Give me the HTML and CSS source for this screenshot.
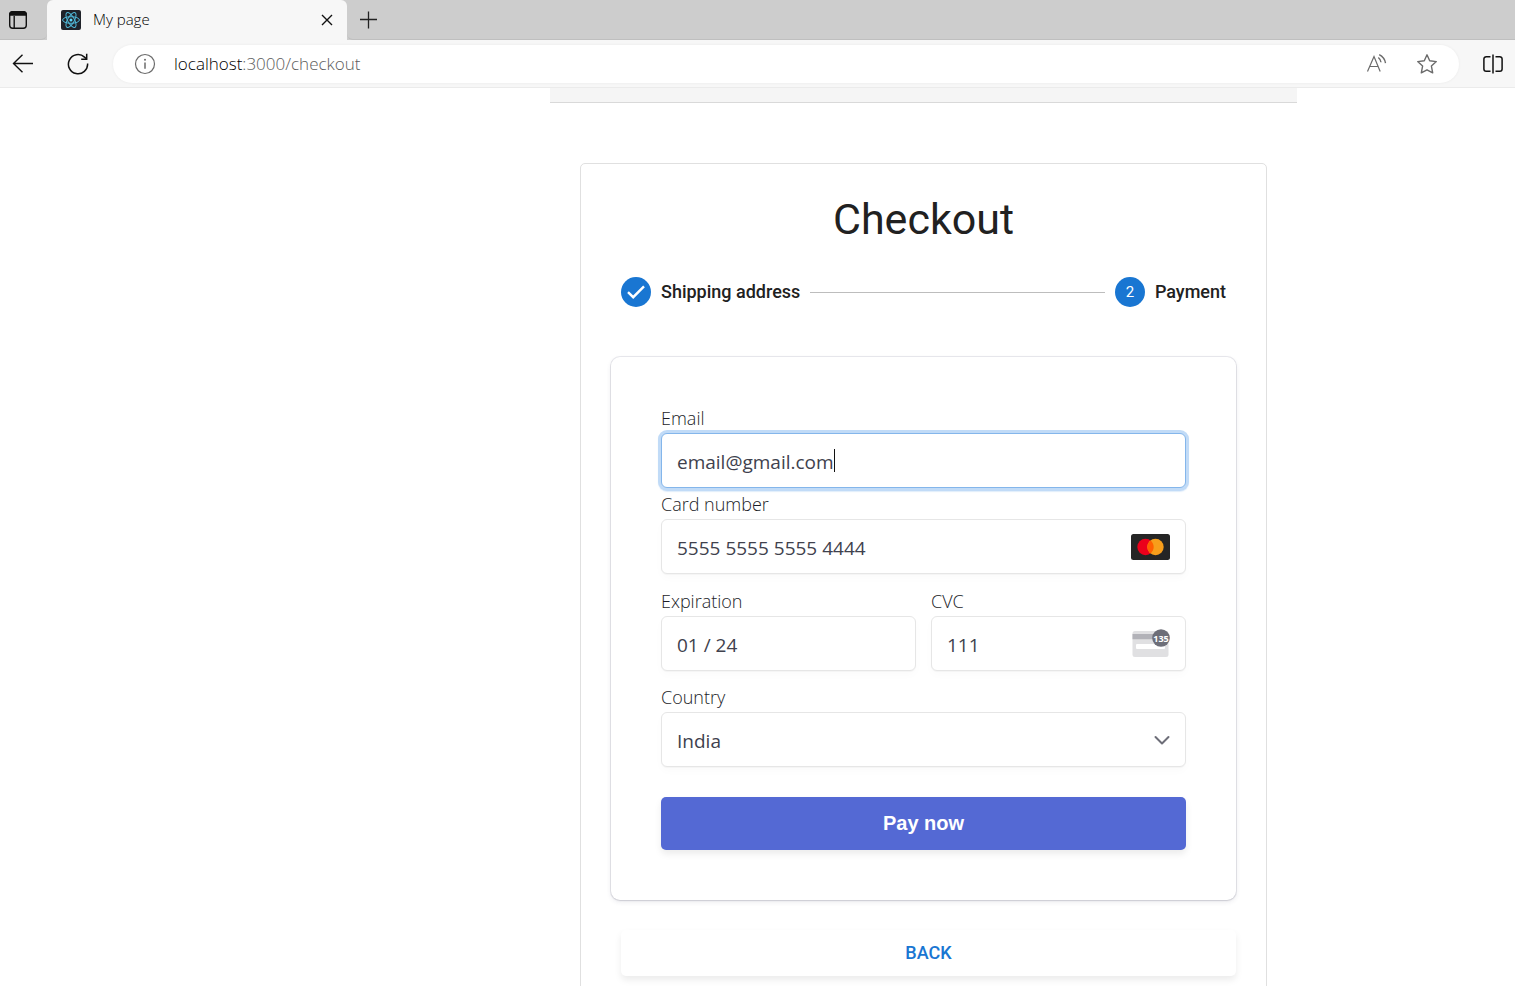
FILE: index.html
```html
<!DOCTYPE html>
<html lang="en">
<head>
<meta charset="utf-8">
<meta name="viewport" content="width=device-width, initial-scale=1">
<title>My page</title>
<link rel="stylesheet" href="styles.css">
</head>
<body class="window">
<header class="browser">
  <div class="tabs">
    <button class="icon-btn tab-actions" aria-label="Tab actions">
      <svg width="20" height="20" viewBox="0 0 20 20" fill="none" stroke="#111" stroke-width="1.4"><rect x="1.7" y="1.7" width="16.6" height="16.6" rx="3"/><path d="M6.2 6v12"/><path d="M1.7 5V4.7a3 3 0 0 1 3-3h10.6a3 3 0 0 1 3 3V5z" fill="#111"/></svg>
    </button>
    <div class="tab">
      <svg class="favicon" width="20" height="20" viewBox="0 0 20 20" fill="none" stroke="#4fb8d8" stroke-width="1"><rect width="20" height="20" rx="2" fill="#20232a" stroke="none"/><ellipse cx="10" cy="10" rx="8.4" ry="3.3"/><ellipse cx="10" cy="10" rx="8.4" ry="3.3" transform="rotate(60 10 10)"/><ellipse cx="10" cy="10" rx="8.4" ry="3.3" transform="rotate(120 10 10)"/><circle cx="10" cy="10" r="1.5" fill="#61dafb" stroke="none"/></svg>
      <span class="tab-title">My page</span>
      <button class="icon-btn" aria-label="Close tab">
        <svg width="12" height="12" viewBox="0 0 12 12" stroke="#111" stroke-width="1.4"><path d="M1 1l10 10M11 1L1 11"/></svg>
      </button>
    </div>
    <button class="icon-btn new-tab" aria-label="New tab">
      <svg width="18" height="18" viewBox="0 0 18 18" stroke="#222" stroke-width="1.3"><path d="M8.5 0.5v17M0 8.5h17"/></svg>
    </button>
  </div>
  <div class="toolbar">
    <button class="icon-btn back" aria-label="Back">
      <svg width="22" height="20" viewBox="0 0 22 20" fill="none" stroke="#111" stroke-width="1.4"><path d="M21 9.5H1.5M10.5 0.7L1.5 9.5l9 8.8"/></svg>
    </button>
    <button class="icon-btn reload" aria-label="Refresh">
      <svg width="22" height="22" viewBox="0 0 22 22" fill="none" stroke="#111" stroke-width="1.5"><path d="M20.6 10.5A9.6 9.6 0 1 1 17.5 4.1L19.6 6"/><path d="M19.7 0.8v5.4h-5.5"/></svg>
    </button>
    <div class="address">
      <svg width="22" height="22" viewBox="0 0 22 22" fill="none" stroke="#6b6b6b" stroke-width="1.2"><circle cx="11" cy="11" r="9.5"/><path d="M11 9.5v6.2" stroke-width="1.5"/><circle cx="11" cy="6.8" r="1" fill="#6b6b6b" stroke="none"/></svg>
      <a class="url" href="#checkout"><span class="host">localhost</span>:3000/checkout</a>
      <button class="icon-btn" aria-label="Read aloud">
        <svg width="22" height="22" viewBox="0 0 22 22" fill="none" stroke="#6b6b6b" stroke-width="1.2"><path d="M1.5 18.5L8 3.5l6.2 15M3.8 13.5h8.4"/><path d="M12.3 4.5q2.4 1.8 2.7 4.8M13.2 1.7q5.3 2.6 6.3 8.4" stroke-width="1.4"/></svg>
      </button>
      <button class="icon-btn" aria-label="Add to favorites">
        <svg width="22" height="22" viewBox="0 0 22 22" fill="none" stroke="#6b6b6b" stroke-width="1.4" stroke-linejoin="round"><path d="M11 1.8l2.7 6 6.6.8-4.9 4.5 1.3 6.7L11 16.8l-5.7 3 1.3-6.7L1.7 8.6l6.6-.8z"/></svg>
      </button>
    </div>
    <button class="icon-btn split" aria-label="Split screen">
      <svg width="20" height="20" viewBox="0 0 20 20" fill="none" stroke="#111" stroke-width="1.5"><path d="M10 0.5v19"/><path d="M7.5 2.7H3.2A2.3 2.3 0 0 0 .9 5v10a2.3 2.3 0 0 0 2.3 2.3h4.3M12.5 2.7h4.3A2.3 2.3 0 0 1 19.1 5v10a2.3 2.3 0 0 1-2.3 2.3h-4.3"/></svg>
    </button>
  </div>
</header>

<main class="page">
  <div class="column">
    <div class="appbar"></div>
    <section class="paper" id="checkout">
      <h1 class="title">Checkout</h1>
      <ol class="stepper">
        <li class="step">
          <span class="dot"><svg width="30" height="30" viewBox="0 0 30 30" fill="none" stroke="#fff" stroke-width="2.4"><path d="M7 15.2l5.2 5L23 9.4"/></svg></span>
          Shipping address
        </li>
        <li class="connector" aria-hidden="true"></li>
        <li class="step"><span class="dot">2</span>Payment</li>
      </ol>

      <form class="card">
        <div class="group">
          <label class="label" for="email">Email</label>
          <div class="field focused">
            <input class="input fit" id="email" type="text" size="15" value="email@gmail.com"><span class="caret"></span>
          </div>
        </div>
        <div class="group tight">
          <label class="label" for="number">Card number</label>
          <div class="field">
            <input class="input" id="number" type="text" value="5555 5555 5555 4444">
            <svg class="brand" width="39" height="26" viewBox="0 0 39 26"><rect width="39" height="26" rx="2.5" fill="#252525"/><circle cx="14.5" cy="13" r="8.2" fill="#eb001b"/><circle cx="24.5" cy="13" r="8.2" fill="#f79e1b"/><path d="M19.5 6.5a8.2 8.2 0 0 1 0 13 8.2 8.2 0 0 1 0-13z" fill="#ff5f00"/></svg>
          </div>
        </div>
        <div class="row">
          <div class="group">
            <label class="label" for="expiry">Expiration</label>
            <div class="field"><input class="input" id="expiry" type="text" value="01 / 24"></div>
          </div>
          <div class="group">
            <label class="label" for="cvc">CVC</label>
            <div class="field">
              <input class="input" id="cvc" type="text" value="111">
              <svg class="brand" width="39" height="30" viewBox="0 1 39 30"><rect x="1.5" y="3" width="36" height="26" rx="2.5" fill="#e0e0e2"/><path d="M1.5 6h36v5.3h-36z" fill="#b2b2b8"/><rect x="5" y="16" width="29" height="5" rx="1" fill="#fff"/><circle cx="30" cy="10" r="8.8" fill="#6d6e78"/><text class="cvc-digits" x="30" y="13.5" text-anchor="middle">135</text></svg>
            </div>
          </div>
        </div>
        <div class="group spaced">
          <label class="label" for="country">Country</label>
          <div class="field">
            <select class="input" id="country"><option>India</option></select>
            <svg width="16" height="10" viewBox="0 0 16 10" fill="none" stroke="#6d6e78" stroke-width="2" stroke-linecap="round" stroke-linejoin="round"><path d="M1.5 2L8 8.5 14.5 2"/></svg>
          </div>
        </div>
        <button class="pay" type="button">Pay now</button>
      </form>

      <button class="back-btn" type="button">BACK</button>
    </section>
  </div>
</main>
</body>
</html>
```
FILE: styles.css
```css
* { box-sizing: border-box; }

.window {
  margin: 0;
  height: 100vh;
  display: flex;
  flex-direction: column;
  background: #fff;
  color: #212121;
  font-family: "Open Sans", "Noto Sans", sans-serif;
}

.icon-btn {
  display: flex;
  padding: 0;
  border: 0;
  background: none;
}

/* Browser chrome */
.browser { flex: none; background: #f7f7f7; border-bottom: 1px solid #ebebeb; }

.tabs { display: flex; height: 40px; background: #cdcdcd; }

.tab-actions {
  width: 47px;
  padding-left: 8px;
  align-items: center;
  border-bottom: 1px solid #bfbfbf;
  border-bottom-right-radius: 6px;
}

.tab {
  display: flex;
  align-items: center;
  gap: 12px;
  width: 300px;
  padding: 0 14px;
  background: #f7f7f7;
  border-radius: 6px 6px 0 0;
}

.tab-title { flex: 1; padding-bottom: 2px; font-size: 15px; font-weight: 300; color: #000; }

.new-tab {
  flex: 1;
  align-items: center;
  padding-left: 13px;
  border-bottom: 1px solid #bfbfbf;
  border-bottom-left-radius: 6px;
}

.toolbar { display: flex; align-items: center; height: 47px; padding: 0 12px; }
.reload { margin-left: 33px; }
.split { margin-left: 24px; }

.address {
  flex: 1;
  display: flex;
  align-items: center;
  gap: 28px;
  height: 38px;
  margin-left: 24px;
  padding: 0 21px;
  background: #fff;
  border-radius: 19px;
  box-shadow: 0 0 3px rgba(0, 0, 0, 0.06);
}

.url {
  flex: 1;
  margin-left: -10px;
  font-size: 17px;
  font-weight: 300;
  color: #5c5c5c;
  text-decoration: none;
}

.host { color: #000; }

/* Page */
.page {
  flex: 1;
  min-height: 0;
  overflow: auto;
  scrollbar-width: none;
  display: grid;
  grid-template-columns: minmax(0, 550fr) minmax(0, 747fr) minmax(0, 218fr);
}

.column { grid-column: 2; }

.appbar { height: 15px; background: #f5f5f5; border-bottom: 1px solid #d9d9d9; }

.paper {
  margin: 60px 30px;
  padding: 30px;
  border: 1px solid #e0e0e0;
  border-radius: 5px;
}

.title {
  margin: 0 0 3px;
  font: 400 43px/50px Roboto, sans-serif;
  text-align: center;
}

.stepper {
  display: flex;
  align-items: center;
  gap: 10px;
  margin: 0;
  padding: 30px 10px 50px;
  list-style: none;
}

.step {
  display: flex;
  align-items: center;
  gap: 10px;
  font: 500 18px/26px Roboto, sans-serif;
}

.dot {
  display: flex;
  align-items: center;
  justify-content: center;
  width: 30px;
  height: 30px;
  border-radius: 50%;
  background: #1976d2;
  color: #fff;
  font-size: 15px;
  font-weight: 400;
}

.connector { flex: 1; height: 1px; background: #bdbdbd; }

.card {
  display: flex;
  flex-direction: column;
  padding: 50px;
  border-radius: 9px;
  box-shadow: 0 0 0 1px rgba(50, 50, 93, 0.1), 0 2px 5px rgba(50, 50, 93, 0.1), 0 1px 2px rgba(0, 0, 0, 0.07);
}

.group { flex: 1; min-width: 0; }
.tight { margin-top: 5px; }
.spaced { margin-top: 15px; }
.row { display: flex; gap: 15px; margin-top: 16px; }

.label {
  display: block;
  height: 26px;
  font-size: 18px;
  line-height: 22px;
  font-weight: 300;
  color: #1c1d28;
}

.field {
  display: flex;
  align-items: center;
  height: 55px;
  padding: 0 15px;
  background: #fff;
  border: 1px solid #e6e6e6;
  border-radius: 6px;
  box-shadow: 0 1px 1px rgba(0, 0, 0, 0.03), 0 4px 8px rgba(0, 0, 0, 0.02);
}

.focused {
  border-color: #84b6eb;
  box-shadow: 0 0 0 3px #c1dbf7, 0 1px 1px 3px rgba(193, 219, 247, 0.5);
}

.input {
  flex: 1;
  min-width: 0;
  height: 26px;
  padding: 2px 0 0;
  border: 0;
  outline: 0;
  appearance: none;
  background: none;
  font: 400 19px/24px "Open Sans", "Noto Sans", sans-serif;
  color: #40414d;
}

.fit { flex: none; field-sizing: content; }
.caret { width: 1px; height: 23px; background: #111; }
.brand { flex: none; }

.cvc-digits { font: 700 9px "Open Sans", sans-serif; fill: #fff; }

.pay {
  height: 53px;
  margin-top: 30px;
  border: 0;
  border-radius: 5px;
  background: #5469d4;
  color: #fff;
  font: 700 20px "Liberation Sans", Arial, sans-serif;
  box-shadow: 0 4px 7px rgba(0, 0, 0, 0.08);
}

.back-btn {
  display: block;
  width: calc(100% - 10px);
  height: 46px;
  margin: 30px 0 0 10px;
  padding: 0 0 2px;
  border: 0;
  border-radius: 5px;
  background: #fff;
  color: #1976d2;
  font: 500 18px Roboto, sans-serif;
  box-shadow: 0 4px 7px rgba(0, 0, 0, 0.08);
}
```
